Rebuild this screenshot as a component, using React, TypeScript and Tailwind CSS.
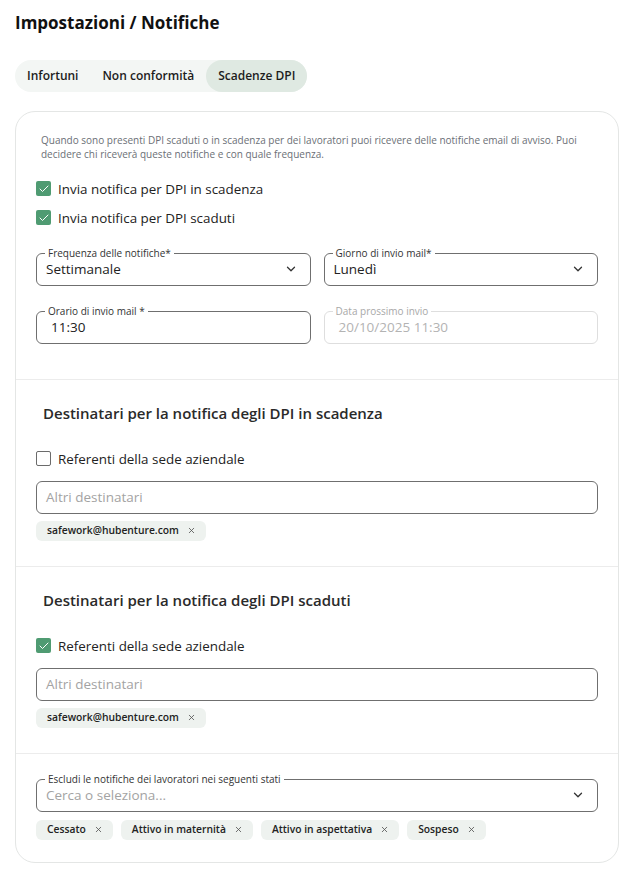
import { ChevronDown, Check, X } from 'lucide-react'

const font = { fontFamily: '"Open Sans", "Noto Sans", sans-serif' }

function Tabs() {
  const tabs = ['Infortuni', 'Non conformità', 'Scadenze DPI']
  return (
    <div className="mt-[24px] flex h-[32px] w-fit items-center rounded-full bg-[#f3f6f4]">
      {tabs.map((t, i) => (
        <div
          key={t}
          className={`flex h-full items-center rounded-full px-[12px] text-[12px] font-semibold text-[#1c1c1c] ${
            i === 2 ? 'bg-[#dfe9e2]' : ''
          }`}
        >
          {t}
        </div>
      ))}
    </div>
  )
}

function Checkbox({ checked, label }: { checked: boolean; label: string }) {
  return (
    <div className="flex items-center gap-[7px]">
      {checked ? (
        <span className="flex h-[15px] w-[15px] items-center justify-center rounded-[2px] bg-[#4f9b72]">
          <Check size={12} strokeWidth={2} className="text-white" />
        </span>
      ) : (
        <span className="h-[15px] w-[15px] rounded-[2px] border-[1.5px] border-[#6b6b6b] bg-white" />
      )}
      <span className="text-[13.4px] leading-[20px] text-[#222]">{label}</span>
    </div>
  )
}

function Field({
  label,
  value,
  select,
  disabled,
  indent,
  placeholder,
}: {
  label?: string
  value: string
  select?: boolean
  disabled?: boolean
  indent?: boolean
  placeholder?: boolean
}) {
  return (
    <div
      className={`relative flex h-[33px] items-center rounded-[6px] border ${
        disabled ? 'border-[#dedede]' : 'border-[#6f6f6f]'
      } ${indent ? 'pl-[14px]' : 'pl-[9px]'} pr-[12px]`}
    >
      {label && (
        <span
          className={`absolute left-[8px] top-[-8px] bg-white px-[3px] text-[10px] leading-[14px] ${
            disabled ? 'text-[#a8a8a8]' : 'text-[#333]'
          }`}
        >
          {label}
        </span>
      )}
      <span
        className={`flex-1 text-[13.5px] ${
          disabled ? 'text-[#b3b3b3]' : placeholder ? 'text-[#a3a3a3]' : 'text-[#222]'
        }`}
      >
        {value}
      </span>
      {select && <ChevronDown size={14} strokeWidth={2.2} className="text-[#333]" />}
    </div>
  )
}

function Chip({ text }: { text: string }) {
  return (
    <span className="flex h-[20px] items-center gap-[8px] rounded-[6px] bg-[#eef2ef] pl-[11px] pr-[10px] text-[10.3px] font-semibold text-[#222]">
      {text}
      <X size={9} strokeWidth={2.2} className="text-[#555]" />
    </span>
  )
}

function Recipients({ title, checked }: { title: string; checked: boolean }) {
  return (
    <div className="border-t border-[#ececec] px-[20px] pb-[25px] pt-[22px]">
      <h3 className="pl-[7px] text-[15px] font-semibold leading-[22px] text-[#2a2a2a]">{title}</h3>
      <div className="mt-[25px]">
        <Checkbox checked={checked} label="Referenti della sede aziendale" />
      </div>
      <div className="mt-[12px]">
        <Field value="Altri destinatari" placeholder />
      </div>
      <div className="mt-[7px] flex">
        <Chip text="safework@hubenture.com" />
      </div>
    </div>
  )
}

export default function App() {
  return (
    <div className="min-h-screen bg-white pb-[11px] pl-[15px] pr-[17px] pt-[10px]" style={font}>
      <h1 className="text-[17px] font-bold text-[#111]">Impostazioni / Notifiche</h1>
      <Tabs />

      <div className="mt-[19px] rounded-[20px] border border-[#e4e6e5] bg-white">
        <div className="px-[20px] pb-[35px] pt-[21px]">
          <p className="pl-[5px] text-[10px] leading-[14px] text-[#6b6f76]">
            Quando sono presenti DPI scaduti o in scadenza per dei lavoratori puoi ricevere delle notifiche email di
            avviso. Puoi decidere chi riceverà queste notifiche e con quale frequenza.
          </p>
          <div className="mt-[18px] flex flex-col gap-[9px]">
            <Checkbox checked label="Invia notifica per DPI in scadenza" />
            <Checkbox checked label="Invia notifica per DPI scaduti" />
          </div>
          <div className="mt-[25px] grid grid-cols-2 gap-x-[13px] gap-y-[25px]">
            <Field label="Frequenza delle notifiche*" value="Settimanale" select />
            <Field label="Giorno di invio mail*" value="Lunedì" select />
            <Field label="Orario di invio mail *" value="11:30" indent />
            <Field label="Data prossimo invio" value="20/10/2025 11:30" disabled indent />
          </div>
        </div>

        <Recipients title="Destinatari per la notifica degli DPI in scadenza" checked={false} />
        <Recipients title="Destinatari per la notifica degli DPI scaduti" checked />

        <div className="border-t border-[#ececec] px-[20px] pb-[22px] pt-[25px]">
          <Field label="Escludi le notifiche dei lavoratori nei seguenti stati" value="Cerca o seleziona..." select placeholder />
          <div className="mt-[8px] flex gap-[8px]">
            <Chip text="Cessato" />
            <Chip text="Attivo in maternità" />
            <Chip text="Attivo in aspettativa" />
            <Chip text="Sospeso" />
          </div>
        </div>
      </div>
    </div>
  )
}
